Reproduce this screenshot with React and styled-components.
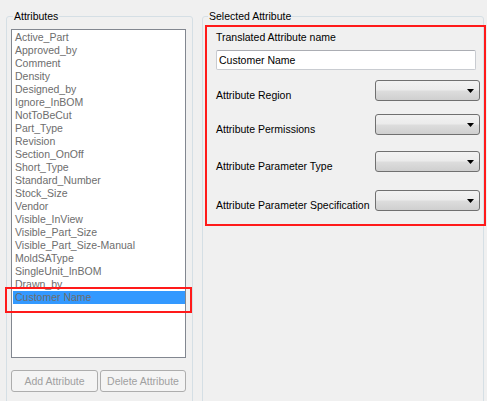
import React from 'react';
import styled, {createGlobalStyle} from 'styled-components';

const GlobalStyle = createGlobalStyle`
    html, body {
        margin: 0;
        padding: 0;
        background: #f0f0f0;
    }

    #root {
        width: 487px;
        height: 401px;
        overflow: hidden;
    }
`;

const Window = styled.div`
    display: flex;
    align-items: flex-start;
    gap: 9px;
    padding: 16px 0 0 6px;
    font-family: "Liberation Sans", Arial, sans-serif;
    font-size: 10.5px;
    line-height: 13px;
    color: #000;
`;

const Group = styled.div`
    position: relative;
    box-sizing: border-box;
    width: ${props => props.width}px;
    height: 420px;
    border: 1px solid #d5dfe5;
    border-radius: 3px;
    padding: ${props => props.pad};
    display: flex;
    flex-direction: column;
`;

const Caption = styled.span`
    position: absolute;
    top: -7px;
    left: ${props => props.left}px;
    padding: 0 1px;
    background: #f0f0f0;
    color: #000;
`;

const ListBox = styled.div`
    box-sizing: border-box;
    width: 175px;
    height: 329px;
    border: 1px solid #828790;
    background: #fff;
    padding: 1px 0 0 1px;
`;

const Item = styled.div`
    position: relative;
    height: 13px;
    padding-left: 2px;
    color: #6d6d6d;
    white-space: nowrap;
    background: ${props => props.selected ? '#3399ff' : 'transparent'};
`;

const Mark = styled.div`
    position: absolute;
    box-sizing: border-box;
    left: -8px;
    top: -4px;
    width: 187px;
    height: 26px;
    border: 2px solid #ff1a1a;
    pointer-events: none;
`;

const ButtonRow = styled.div`
    display: flex;
    gap: 2px;
    margin-top: 12px;
`;

const Button = styled.button`
    box-sizing: border-box;
    width: ${props => props.width}px;
    height: 22px;
    border: 1px solid #adadad;
    border-radius: 3px;
    background: #f4f4f4;
    color: #a0a0a0;
    font: inherit;
    padding: 0;
`;

const Form = styled.div`
    box-sizing: border-box;
    width: 281px;
    height: 201px;
    margin-right: -2px;
    border: 2px solid #ff1a1a;
    padding: 4px 0 0 9px;
    display: flex;
    flex-direction: column;
`;

const Label = styled.div`
    white-space: nowrap;
`;

const TextField = styled.div`
    box-sizing: border-box;
    width: 260px;
    height: 20px;
    margin-top: 6px;
    border: 1px solid #c9ccd1;
    border-top-color: #abadb3;
    border-radius: 2px;
    background: #fff;
    padding: 3px 0 0 2px;
`;

const Row = styled.div`
    display: flex;
    align-items: flex-start;
    justify-content: space-between;
    margin-top: ${props => props.gap}px;
    padding-right: 4px;
`;

const RowLabel = styled(Label)`
    padding-top: 9px;
`;

const Combo = styled.div`
    box-sizing: border-box;
    width: 105px;
    height: 21px;
    border: 1px solid #707070;
    border-radius: 3px;
    background: linear-gradient(#f2f2f2 0%, #ebebeb 48%, #dddddd 52%, #cfcfcf 100%);
    display: flex;
    align-items: center;
    justify-content: flex-end;
    padding-right: 5px;
`;

const items = [
    'Active_Part', 'Approved_by', 'Comment', 'Density', 'Designed_by',
    'Ignore_InBOM', 'NotToBeCut', 'Part_Type', 'Revision', 'Section_OnOff',
    'Short_Type', 'Standard_Number', 'Stock_Size', 'Vendor', 'Visible_InView',
    'Visible_Part_Size', 'Visible_Part_Size-Manual', 'MoldSAType',
    'SingleUnit_InBOM', 'Drawn_by', 'Customer Name',
];

const fields = [
    {label: 'Attribute Region', gap: 10},
    {label: 'Attribute Permissions', gap: 12},
    {label: 'Attribute Parameter Type', gap: 15},
    {label: 'Attribute Parameter Specification', gap: 17},
];

const Arrow = () => (
    <svg width="7" height="4" viewBox="0 0 7 4">
        <path d="M0 0 L7 0 L3.5 4 Z" fill="#000" />
    </svg>
);

export default function App() {
    return (
        <>
            <GlobalStyle />
            <Window>
                <Group width={187} pad="12px 0 0 4px">
                    <Caption left={6}>Attributes</Caption>
                    <ListBox>
                        {items.map(name => {
                            const selected = name === 'Customer Name';
                            return (
                                <Item key={name} selected={selected}>
                                    {name}
                                    {selected && <Mark />}
                                </Item>
                            );
                        })}
                    </ListBox>
                    <ButtonRow>
                        <Button width={87} disabled>Add Attribute</Button>
                        <Button width={86} disabled>Delete Attribute</Button>
                    </ButtonRow>
                </Group>
                <Group width={282} pad="8px 0 0 2px">
                    <Caption left={5}>Selected Attribute</Caption>
                    <Form>
                        <Label>Translated Attribute name</Label>
                        <TextField>Customer Name</TextField>
                        {fields.map(f => (
                            <Row key={f.label} gap={f.gap}>
                                <RowLabel>{f.label}</RowLabel>
                                <Combo><Arrow /></Combo>
                            </Row>
                        ))}
                    </Form>
                </Group>
            </Window>
        </>
    );
}
